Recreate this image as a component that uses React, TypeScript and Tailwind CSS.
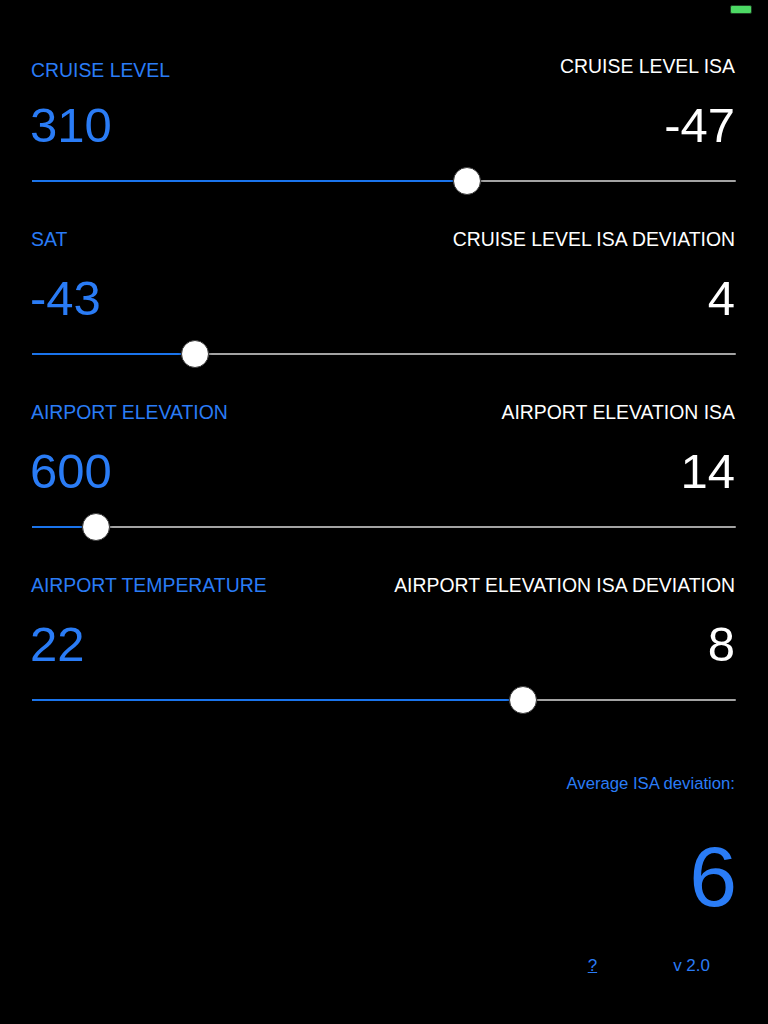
import React from "react";

type Row = {
  left: string;
  right: string;
  value: string;
  result: string;
  thumb: number; // thumb centre x in page px
  leftLabelOffset?: boolean;
};

const rows: Row[] = [
  { left: "CRUISE LEVEL", right: "CRUISE LEVEL ISA", value: "310", result: "-47", thumb: 467, leftLabelOffset: true },
  { left: "SAT", right: "CRUISE LEVEL ISA DEVIATION", value: "-43", result: "4", thumb: 195 },
  { left: "AIRPORT ELEVATION", right: "AIRPORT ELEVATION ISA", value: "600", result: "14", thumb: 96 },
  { left: "AIRPORT TEMPERATURE", right: "AIRPORT ELEVATION ISA DEVIATION", value: "22", result: "8", thumb: 523 },
];

const TRACK_LEFT = 32;

function Slider({ thumb }: { thumb: number }) {
  const offset = thumb - TRACK_LEFT;
  return (
    <div className="relative h-[28px] ml-[32px] mr-[32px]">
      <div className="absolute left-0 right-0 top-[13px] h-[2px] bg-[#a3a3a3] rounded-full" />
      <div
        className="absolute left-0 top-[13px] h-[2px] bg-[#1a74ec] rounded-full"
        style={{ width: `${offset}px` }}
      />
      <div
        className="absolute top-0 w-[28px] h-[28px] rounded-full bg-white border border-[#3a3a3a] shadow-[0_1px_3px_rgba(0,0,0,0.6)]"
        style={{ left: `${offset - 14}px` }}
      />
    </div>
  );
}

function Section({ row }: { row: Row }) {
  return (
    <div className="flex flex-col">
      <div className="flex justify-between items-start h-[24px] pl-[31px] pr-[33px] text-[19.4px] leading-[24px]">
        <span className={`text-[#2a7cf6] ${row.leftLabelOffset ? "mt-[4px]" : ""}`}>{row.left}</span>
        <span className="text-white">{row.right}</span>
      </div>
      <div className="flex justify-between items-start h-[49px] mt-[23px] pl-[30px] pr-[33px] text-[49px] leading-[49px]">
        <span className="text-[#2a7cf6]">{row.value}</span>
        <span className="text-white">{row.result}</span>
      </div>
      <div className="mt-[17px]">
        <Slider thumb={row.thumb} />
      </div>
    </div>
  );
}

export default function App() {
  return (
    <div
      className="relative w-[768px] h-[1024px] bg-black overflow-hidden"
      style={{ fontFamily: '"Liberation Sans", Arial, sans-serif' }}
    >
      <div className="flex justify-end h-[20px] pt-[5px] pr-[16px]">
        <div className="w-[22px] h-[9px] rounded-[2px] bg-[#4cd964] border border-[#1d3d22]" />
      </div>
      <div className="flex flex-col gap-[32px] pt-[34px]">
        {rows.map((r) => (
          <Section key={r.left} row={r} />
        ))}
      </div>
      <div className="flex flex-col items-end pr-[33px]">
        <div className="mt-[60px] h-[20px] text-[16.7px] leading-[20px] text-[#2a7cf6]">
          Average ISA deviation:
        </div>
        <div className="mt-[40px] h-[84px] text-[86px] leading-[84px] text-[#2a7cf6] mr-[-2px]">6</div>
      </div>
      <div className="flex justify-end items-start mt-[38px] pr-[58px] h-[20px] text-[17px] leading-[20px] text-[#2a7cf6] gap-[76px]">
        <span className="underline">?</span>
        <span>v 2.0</span>
      </div>
    </div>
  );
}
